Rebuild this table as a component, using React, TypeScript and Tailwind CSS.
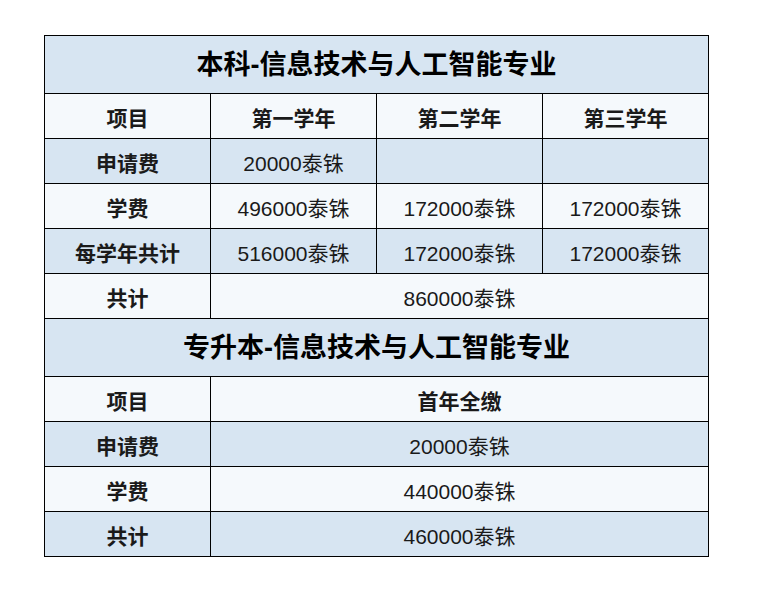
import React from "react";

const blue = "bg-[#d7e5f2]";
const white = "bg-[#f5f9fc]";

function Cell({
  children,
  bold,
  span,
}: {
  children?: React.ReactNode;
  bold?: boolean;
  span?: number;
}) {
  return (
    <td
      colSpan={span}
      className={`border border-black text-center align-middle h-[45px] p-0 pt-[5px] text-[21px] text-[#1a1a1a] ${
        bold ? "font-bold" : "font-normal"
      }`}
    >
      {children}
    </td>
  );
}

function Title({ children }: { children: React.ReactNode }) {
  return (
    <tr className={blue}>
      <td
        colSpan={4}
        className="border border-black text-center align-middle h-[58px] p-0 pt-[2px] text-[27px] font-bold text-black"
      >
        {children}
      </td>
    </tr>
  );
}

export default function App() {
  return (
    <div
      className="pl-[44px] pt-[35px] bg-white min-h-[602px]"
      style={{ fontFamily: '"Liberation Sans", "Noto Sans CJK SC", sans-serif' }}
    >
      <table className="border-collapse table-fixed w-[665px]">
        <colgroup>
          <col className="w-[166px]" />
          <col className="w-[166px]" />
          <col className="w-[166px]" />
          <col className="w-[166px]" />
        </colgroup>
        <tbody>
          <Title>本科-信息技术与人工智能专业</Title>
          <tr className={white}>
            <Cell bold>项目</Cell>
            <Cell bold>第一学年</Cell>
            <Cell bold>第二学年</Cell>
            <Cell bold>第三学年</Cell>
          </tr>
          <tr className={blue}>
            <Cell bold>申请费</Cell>
            <Cell>20000泰铢</Cell>
            <Cell></Cell>
            <Cell></Cell>
          </tr>
          <tr className={white}>
            <Cell bold>学费</Cell>
            <Cell>496000泰铢</Cell>
            <Cell>172000泰铢</Cell>
            <Cell>172000泰铢</Cell>
          </tr>
          <tr className={blue}>
            <Cell bold>每学年共计</Cell>
            <Cell>516000泰铢</Cell>
            <Cell>172000泰铢</Cell>
            <Cell>172000泰铢</Cell>
          </tr>
          <tr className={white}>
            <Cell bold>共计</Cell>
            <Cell span={3}>860000泰铢</Cell>
          </tr>
          <Title>专升本-信息技术与人工智能专业</Title>
          <tr className={white}>
            <Cell bold>项目</Cell>
            <Cell bold span={3}>首年全缴</Cell>
          </tr>
          <tr className={blue}>
            <Cell bold>申请费</Cell>
            <Cell span={3}>20000泰铢</Cell>
          </tr>
          <tr className={white}>
            <Cell bold>学费</Cell>
            <Cell span={3}>440000泰铢</Cell>
          </tr>
          <tr className={blue}>
            <Cell bold>共计</Cell>
            <Cell span={3}>460000泰铢</Cell>
          </tr>
        </tbody>
      </table>
    </div>
  );
}
